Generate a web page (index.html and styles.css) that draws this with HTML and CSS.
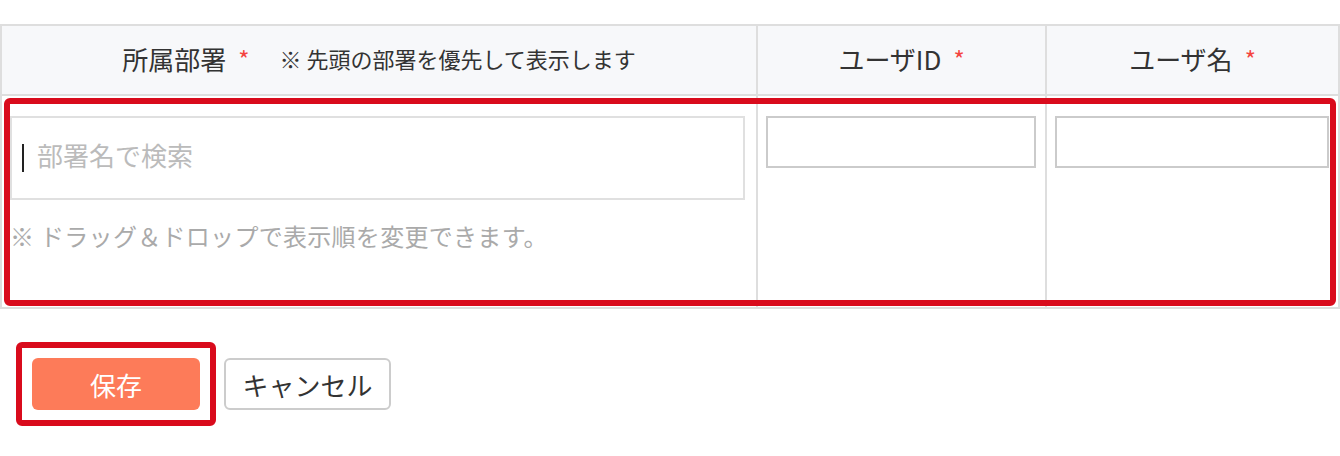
FILE: index.html
```html
<!DOCTYPE html>
<html lang="ja">
<head>
    <meta charset="UTF-8">
    <title>所属部署の編集</title>
    <link rel="stylesheet" href="styles.css">
</head>
<body>

    <div class="page">
        <div class="grid">
            <div class="head">
                <span class="label">所属部署</span><span class="req">*</span>
                <span class="hint">※ 先頭の部署を優先して表示します</span>
            </div>
            <div class="head">
                <span class="label">ユーザID</span><span class="req">*</span>
            </div>
            <div class="head">
                <span class="label">ユーザ名</span><span class="req">*</span>
            </div>

            <div class="cell">
                <div class="search">
                    <span class="caret"></span>
                    <span class="placeholder">部署名で検索</span>
                </div>
                <p class="note">※ ドラッグ＆ドロップで表示順を変更できます。</p>
            </div>
            <div class="cell">
                <div class="field"></div>
            </div>
            <div class="cell">
                <div class="field"></div>
            </div>

            <div class="mark mark-row"></div>
        </div>

        <div class="actions">
            <div class="save-wrap">
                <button class="btn btn-save">保存</button>
                <div class="mark mark-btn"></div>
            </div>
            <button class="btn btn-cancel">キャンセル</button>
        </div>
    </div>

</body>
</html>
```

FILE: styles.css
```css
body {
    margin: 0;
    background-color: #fff;
    font-family: 'Noto Sans CJK JP', 'Noto Sans', sans-serif;
    color: #333;
}

.page {
    padding: 24px 0 46px;
    width: 1340px;
}

.grid {
    position: relative;
    display: grid;
    grid-template-columns: 754px 287px 291px;
    grid-template-rows: 68px 211px;
    gap: 2px;
    padding: 2px;
    background-color: #dedede;
}

.head {
    display: flex;
    justify-content: center;
    align-items: center;
    background-color: #f7f8fa;
    font-size: 26px;
    padding-bottom: 4px;
}

.req {
    color: #f4443f;
    margin-left: 12px;
    font-size: 24px;
}

.hint {
    font-size: 22px;
    margin-left: 30px;
}

.cell {
    background-color: #fff;
    padding: 20px 9px 0 8px;
}

.search {
    display: flex;
    align-items: center;
    height: 80px;
    border: 2px solid #e0e0e0;
    padding-left: 10px;
    margin-right: 2px;
}

.caret {
    width: 2px;
    height: 28px;
    background-color: #222;
    margin-right: 13px;
}

.placeholder {
    font-size: 26px;
    color: #bbb;
    margin-top: -8px;
}

.note {
    margin: 18px 0 0;
    font-size: 24px;
    letter-spacing: 0.3px;
    color: #aaa;
}

.field {
    height: 48px;
    border: 2px solid #cbcbcb;
}

.mark {
    position: absolute;
    border: 6px solid #d90b1c;
    border-radius: 6px;
    pointer-events: none;
}

.mark-row {
    top: 74px;
    left: 4px;
    right: 4px;
    bottom: 3px;
}

.actions {
    display: flex;
    gap: 24px;
    padding: 49px 0 0 32px;
}

.save-wrap {
    position: relative;
    display: flex;
}

.btn {
    height: 52px;
    border-radius: 6px;
    font-family: inherit;
    font-size: 26px;
    padding: 0;
}

.btn-save {
    width: 168px;
    border: none;
    background-color: #fd7b59;
    color: #fff;
}

.btn-cancel {
    width: 167px;
    border: 2px solid #cccccc;
    background-color: #fff;
    color: #333;
}

.mark-btn {
    top: -16px;
    left: -16px;
    right: -16px;
    bottom: -16px;
}
```
